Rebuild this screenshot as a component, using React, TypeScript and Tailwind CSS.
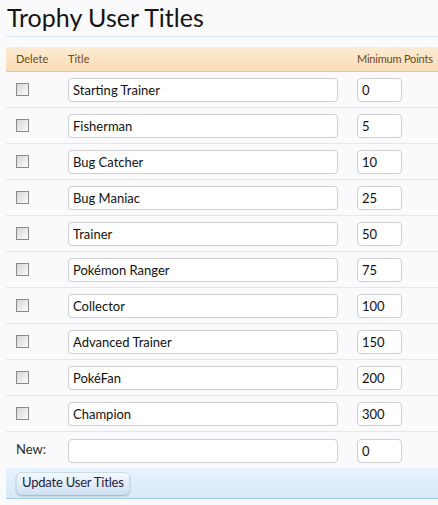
import React from "react";

const titles: [string, string][] = [
  ["Starting Trainer", "0"],
  ["Fisherman", "5"],
  ["Bug Catcher", "10"],
  ["Bug Maniac", "25"],
  ["Trainer", "50"],
  ["Pokémon Ranger", "75"],
  ["Collector", "100"],
  ["Advanced Trainer", "150"],
  ["PokéFan", "200"],
  ["Champion", "300"],
];

function Checkbox() {
  return (
    <span className="block w-[13px] h-[13px] border border-[#8a8a8a] bg-gradient-to-br from-[#d6d6d6] to-[#fbfbfb]" />
  );
}

function TitleInput({ value }: { value: string }) {
  return (
    <input
      readOnly
      value={value}
      className="w-[270px] h-[24px] px-[4px] rounded-[4px] border border-[#cfcfcf] bg-white text-[13px] text-[#111] outline-none"
    />
  );
}

function PointsInput({ value }: { value: string }) {
  return (
    <input
      readOnly
      value={value}
      className="w-[45px] h-[24px] px-[4px] rounded-[4px] border border-[#cfcfcf] bg-white text-[13px] text-[#111] outline-none"
    />
  );
}

export default function App() {
  return (
    <div
      className="w-[438px] h-[505px] bg-[#fafafc] pl-[6px] overflow-hidden"
      style={{ fontFamily: "Lato, 'Open Sans', sans-serif" }}
    >
      <h1 className="h-[37px] pt-[3px] pl-[1px] text-[25px] leading-[28px] text-[#141414] border-b border-[#d8e9f7]">
        Trophy User Titles
      </h1>
      <div className="mt-[10px]">
        <div className="flex items-center h-[25px] border-b border-[#f5c48a] bg-gradient-to-b from-[#fdebd4] to-[#f9dcb5] text-[11px] text-[#6b4a22]">
          <div className="w-[62px] pl-[10px]">Delete</div>
          <div className="w-[289px]">Title</div>
          <div className="flex-1 tracking-[-0.2px]">Minimum Points</div>
        </div>
        {titles.map(([t, p]) => (
          <div
            key={t}
            className="flex items-center h-[36px] border-b border-[#dde9f4]"
          >
            <div className="w-[62px] pl-[10px]">
              <Checkbox />
            </div>
            <div className="w-[289px]">
              <TitleInput value={t} />
            </div>
            <div className="flex-1">
              <PointsInput value={p} />
            </div>
          </div>
        ))}
        <div className="flex items-center h-[36px]">
          <div className="w-[62px] pl-[10px] text-[13px] text-[#2a2a2a]">New:</div>
          <div className="w-[289px]">
            <TitleInput value="" />
          </div>
          <div className="flex-1">
            <PointsInput value="0" />
          </div>
        </div>
        <div className="h-[31px] flex items-center pl-[10px] bg-gradient-to-b from-[#e8f3fc] to-[#d6e9f8] border-b border-[#a9cce9]">
          <button className="h-[23px] px-[5px] rounded-[6px] border border-[#c9dcee] bg-gradient-to-b from-[#f4f9fd] to-[#cfe3f4] shadow-[0_1px_2px_rgba(0,0,0,0.25)] text-[13px] tracking-[-0.2px] text-[#26223f]">
            Update User Titles
          </button>
        </div>
      </div>
    </div>
  );
}
